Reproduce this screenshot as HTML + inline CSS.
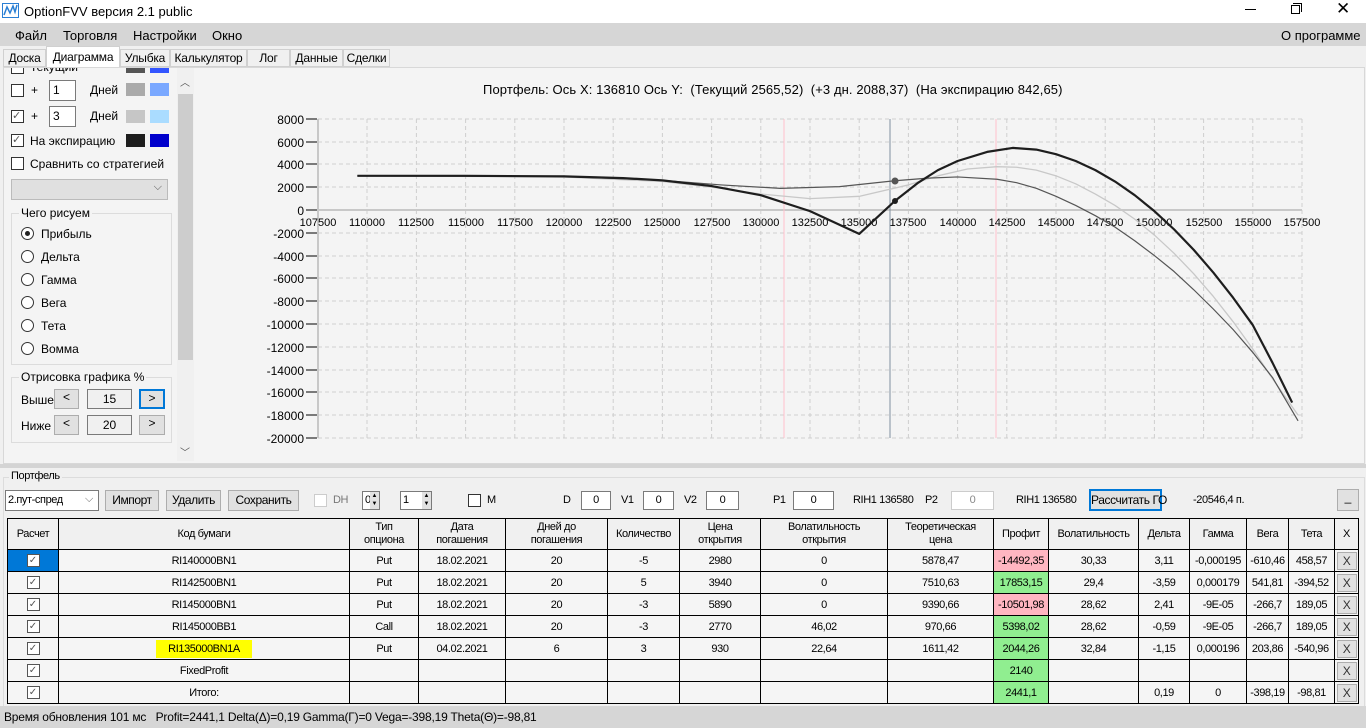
<!DOCTYPE html>
<html><head><meta charset="utf-8">
<style>
*{box-sizing:border-box;margin:0;padding:0}
body{width:1366px;height:728px;overflow:hidden;background:#f0f0f0;font-family:"Liberation Sans",sans-serif;font-size:12px;color:#000;position:relative}
.a{position:absolute;white-space:nowrap}
.n{font-family:"Liberation Sans",sans-serif;font-size:11px;letter-spacing:-0.4px}
.tab{position:absolute;top:49px;height:18px;border:1px solid #d0d0d0;background:#f0f0f0;font-size:12px;line-height:16px;text-align:center;letter-spacing:-0.2px}
.cb{position:absolute;width:13px;height:13px;border:1px solid #333;background:#fff}
.rb{position:absolute;width:13px;height:13px;border:1px solid #333;border-radius:50%;background:#fff}
.btn{position:absolute;background:#e1e1e1;border:1px solid #adadad;text-align:center;font-size:12px;white-space:nowrap}
.inp{position:absolute;background:#fff;border:1px solid #7a7a7a;text-align:center}
table{position:absolute;left:7px;top:518px;border-collapse:collapse;table-layout:fixed;font-family:"Liberation Sans",sans-serif;font-size:11px;letter-spacing:-0.4px}
td{border:1px solid #000;height:22px;text-align:center;background:#f5f5f5;padding:0;white-space:nowrap;overflow:hidden}
tr.h td{height:31px;background:#f0f0f0;line-height:13px}
.r{background:#ffb6c1}.g{background:#90ee90}
.ck{display:inline-block;width:13px;height:13px;border:1px solid #555;background:#fff;vertical-align:middle;font-size:10px;line-height:11px;color:#555;letter-spacing:0}
.x{display:inline-block;width:20px;height:18px;background:#e1e1e1;border:1px solid #adadad;line-height:16px;font-size:12px;color:#333}
</style></head><body>
<div class="a" style="left:0;top:0;width:1366px;height:23px;background:#fff"></div>
<svg class="a" style="left:2px;top:3px" width="18" height="16"><rect x="0.5" y="0.5" width="16" height="14" fill="none" stroke="#2a7fd4"/><polyline points="2,12 5,4 8,10 11,3 13,9 15,2" fill="none" stroke="#2a7fd4" stroke-width="1.5"/></svg>
<div class="a" style="left:24px;top:4px;font-size:13px">OptionFVV версия 2.1 public</div>
<div class="a" style="left:1245px;top:0;font-size:16px;width:120px">
<span class="a" style="left:0;top:9px;width:11px;height:1px;background:#000"></span>
<span class="a" style="left:46px;top:5px;width:9px;height:9px;border:1px solid #000"></span>
<span class="a" style="left:48px;top:3px;width:9px;height:9px;border-top:1px solid #000;border-right:1px solid #000"></span>
<span class="a" style="left:91px;top:-1px;font-size:17px">✕</span></div>
<div class="a" style="left:0;top:23px;width:1366px;height:23px;background:#d6d6d6"></div>
<div class="a" style="left:15px;top:28px;font-size:13px">Файл</div>
<div class="a" style="left:63px;top:28px;font-size:13px">Торговля</div>
<div class="a" style="left:133px;top:28px;font-size:13px">Настройки</div>
<div class="a" style="left:212px;top:28px;font-size:13px">Окно</div>
<div class="a" style="left:1281px;top:28px;font-size:13px">О программе</div>
<div class="tab" style="left:3px;width:43px">Доска</div>
<div class="tab" style="left:46px;width:74px;top:46px;height:22px;background:#fff;border-bottom:none;line-height:20px">Диаграмма</div>
<div class="tab" style="left:120px;width:50px">Улыбка</div>
<div class="tab" style="left:170px;width:77px">Калькулятор</div>
<div class="tab" style="left:247px;width:43px">Лог</div>
<div class="tab" style="left:290px;width:53px">Данные</div>
<div class="tab" style="left:343px;width:47px">Сделки</div>
<div class="a" style="left:3px;top:67px;width:1362px;height:397px;border:1px solid #d8d8d8;background:#f4f4f4"></div>
<div class="a" style="left:4px;top:68px;width:172px;height:393px;background:#f4f4f4;overflow:hidden">
 <div class="cb" style="left:7px;top:-7px"></div><div class="a" style="left:26px;top:-8px">Текущий</div>
 <div class="a" style="left:122px;top:-2px;width:19px;height:7px;background:#555"></div><div class="a" style="left:146px;top:-2px;width:19px;height:7px;background:#3355ff"></div>
 <div class="cb" style="left:7px;top:16px"></div><div class="a" style="left:27px;top:15px">+</div>
 <div class="inp" style="left:45px;top:12px;width:27px;height:21px;text-align:left;padding-left:3px;line-height:19px">1</div>
 <div class="a" style="left:86px;top:15px">Дней</div>
 <div class="a" style="left:122px;top:15px;width:19px;height:13px;background:#aaa"></div><div class="a" style="left:146px;top:15px;width:19px;height:13px;background:#7aa8ff"></div>
 <div class="cb" style="left:7px;top:42px;font-size:11px;line-height:11px;color:#555">✓</div><div class="a" style="left:27px;top:41px">+</div>
 <div class="inp" style="left:45px;top:38px;width:27px;height:21px;text-align:left;padding-left:3px;line-height:19px">3</div>
 <div class="a" style="left:86px;top:41px">Дней</div>
 <div class="a" style="left:122px;top:42px;width:19px;height:13px;background:#c6c6c6"></div><div class="a" style="left:146px;top:42px;width:19px;height:13px;background:#aadcff"></div>
 <div class="cb" style="left:7px;top:66px;font-size:11px;line-height:11px;color:#555">✓</div><div class="a" style="left:26px;top:66px">На экспирацию</div>
 <div class="a" style="left:122px;top:66px;width:19px;height:13px;background:#1e1e1e"></div><div class="a" style="left:146px;top:66px;width:19px;height:13px;background:#0000cc"></div>
 <div class="cb" style="left:7px;top:89px"></div><div class="a" style="left:26px;top:89px">Сравнить со стратегией</div>
 <div class="a" style="left:7px;top:111px;width:157px;height:21px;background:#e0e0e0;border:1px solid #bbb"><span class="a" style="right:5px;top:1px;font-size:11px;color:#555">⌵</span></div>
 <div class="a" style="left:7px;top:145px;width:161px;height:152px;border:1px solid #dcdcdc"></div>
 <div class="a" style="left:15px;top:138px;background:#f4f4f4;padding:0 2px">Чего рисуем</div>
 <div class="rb" style="left:17px;top:159px"><span class="a" style="left:3px;top:3px;width:5px;height:5px;border-radius:50%;background:#222"></span></div><div class="a" style="left:37px;top:159px">Прибыль</div>
 <div class="rb" style="left:17px;top:182px"></div><div class="a" style="left:37px;top:182px">Дельта</div>
 <div class="rb" style="left:17px;top:205px"></div><div class="a" style="left:37px;top:205px">Гамма</div>
 <div class="rb" style="left:17px;top:228px"></div><div class="a" style="left:37px;top:228px">Вега</div>
 <div class="rb" style="left:17px;top:251px"></div><div class="a" style="left:37px;top:251px">Тета</div>
 <div class="rb" style="left:17px;top:274px"></div><div class="a" style="left:37px;top:274px">Вомма</div>
 <div class="a" style="left:7px;top:309px;width:161px;height:66px;border:1px solid #dcdcdc"></div>
 <div class="a" style="left:15px;top:302px;background:#f4f4f4;padding:0 2px">Отрисовка графика %</div>
 <div class="a" style="left:17px;top:325px">Выше</div>
 <div class="btn" style="left:50px;top:321px;width:25px;height:20px">&lt;</div>
 <div class="inp" style="left:83px;top:321px;width:45px;height:20px;line-height:18px;background:#f0f0f0">15</div>
 <div class="btn" style="left:135px;top:321px;width:26px;height:20px;border:2px solid #0078d7">&gt;</div>
 <div class="a" style="left:17px;top:351px">Ниже</div>
 <div class="btn" style="left:50px;top:347px;width:25px;height:20px">&lt;</div>
 <div class="inp" style="left:83px;top:347px;width:45px;height:20px;line-height:18px;background:#f0f0f0">20</div>
 <div class="btn" style="left:135px;top:347px;width:26px;height:20px">&gt;</div>
</div>
<div class="a" style="left:177px;top:68px;width:17px;height:393px;background:#f0f0f0"><div class="a" style="left:1px;top:26px;width:15px;height:266px;background:#cdcdcd"></div><span class="a" style="left:3px;top:6px;font-size:10px;color:#555">︿</span><span class="a" style="left:3px;top:376px;font-size:10px;color:#555">﹀</span></div>
<div class="a" style="left:483px;top:82px;font-size:13px;letter-spacing:0.1px">Портфель: Ось X: 136810 Ось Y:&nbsp; (Текущий 2565,52)&nbsp; (+3 дн. 2088,37)&nbsp; (На экспирацию 842,65)</div>
<svg class="a" style="left:0;top:0" width="1366" height="470">
<g stroke="#cfcfcf" stroke-dasharray="4,3" stroke-width="1">
<line x1="318" y1="119" x2="1302" y2="119"/><line x1="318" y1="142" x2="1302" y2="142"/><line x1="318" y1="164" x2="1302" y2="164"/><line x1="318" y1="187" x2="1302" y2="187"/>
<line x1="318" y1="233" x2="1302" y2="233"/><line x1="318" y1="256" x2="1302" y2="256"/><line x1="318" y1="278" x2="1302" y2="278"/><line x1="318" y1="301" x2="1302" y2="301"/><line x1="318" y1="324" x2="1302" y2="324"/><line x1="318" y1="347" x2="1302" y2="347"/><line x1="318" y1="370" x2="1302" y2="370"/><line x1="318" y1="392" x2="1302" y2="392"/><line x1="318" y1="415" x2="1302" y2="415"/><line x1="318" y1="438" x2="1302" y2="438"/>
<line x1="367" y1="119" x2="367" y2="438"/><line x1="416.4" y1="119" x2="416.4" y2="438"/><line x1="465.6" y1="119" x2="465.6" y2="438"/><line x1="514.8" y1="119" x2="514.8" y2="438"/><line x1="564" y1="119" x2="564" y2="438"/><line x1="613.2" y1="119" x2="613.2" y2="438"/><line x1="662.4" y1="119" x2="662.4" y2="438"/><line x1="711.6" y1="119" x2="711.6" y2="438"/><line x1="760.8" y1="119" x2="760.8" y2="438"/><line x1="810" y1="119" x2="810" y2="438"/><line x1="859.2" y1="119" x2="859.2" y2="438"/><line x1="908.4" y1="119" x2="908.4" y2="438"/><line x1="957.6" y1="119" x2="957.6" y2="438"/><line x1="1006.8" y1="119" x2="1006.8" y2="438"/><line x1="1056" y1="119" x2="1056" y2="438"/><line x1="1105.2" y1="119" x2="1105.2" y2="438"/><line x1="1154.4" y1="119" x2="1154.4" y2="438"/><line x1="1203.6" y1="119" x2="1203.6" y2="438"/><line x1="1252.8" y1="119" x2="1252.8" y2="438"/><line x1="1302" y1="119" x2="1302" y2="438"/>
</g>
<line x1="318" y1="119" x2="318" y2="438" stroke="#c8c8c8" stroke-width="2"/>
<line x1="318" y1="210" x2="1302" y2="210" stroke="#c8c8c8" stroke-width="2"/>
<g stroke="#000"><line x1="306" y1="119" x2="317" y2="119"/><line x1="306" y1="142" x2="317" y2="142"/><line x1="306" y1="164" x2="317" y2="164"/><line x1="306" y1="187" x2="317" y2="187"/><line x1="306" y1="210" x2="317" y2="210"/><line x1="306" y1="233" x2="317" y2="233"/><line x1="306" y1="256" x2="317" y2="256"/><line x1="306" y1="278" x2="317" y2="278"/><line x1="306" y1="301" x2="317" y2="301"/><line x1="306" y1="324" x2="317" y2="324"/><line x1="306" y1="347" x2="317" y2="347"/><line x1="306" y1="370" x2="317" y2="370"/><line x1="306" y1="392" x2="317" y2="392"/><line x1="306" y1="415" x2="317" y2="415"/><line x1="306" y1="438" x2="317" y2="438"/></g>
<line x1="784" y1="119" x2="784" y2="438" stroke="#ffc0cb"/>
<line x1="996" y1="119" x2="996" y2="438" stroke="#ffc0cb"/>
<line x1="890" y1="119" x2="890" y2="438" stroke="#8090a0"/>
<g font-family="Liberation Sans,sans-serif" font-size="12" text-anchor="end">
<text x="304" y="124">8000</text><text x="304" y="147">6000</text><text x="304" y="169">4000</text><text x="304" y="192">2000</text><text x="304" y="215">0</text><text x="304" y="238">-2000</text><text x="304" y="261">-4000</text><text x="304" y="283">-6000</text><text x="304" y="306">-8000</text><text x="304" y="329">-10000</text><text x="304" y="352">-12000</text><text x="304" y="375">-14000</text><text x="304" y="397">-16000</text><text x="304" y="420">-18000</text><text x="304" y="443">-20000</text>
</g>
<g font-family="Liberation Sans,sans-serif" font-size="11" text-anchor="middle">
<text x="318" y="226">107500</text><text x="367" y="226">110000</text><text x="416" y="226">112500</text><text x="466" y="226">115000</text><text x="515" y="226">117500</text><text x="564" y="226">120000</text><text x="613" y="226">122500</text><text x="662" y="226">125000</text><text x="712" y="226">127500</text><text x="761" y="226">130000</text><text x="810" y="226">132500</text><text x="859" y="226">135000</text><text x="908" y="226">137500</text><text x="958" y="226">140000</text><text x="1007" y="226">142500</text><text x="1056" y="226">145000</text><text x="1105" y="226">147500</text><text x="1154" y="226">150000</text><text x="1204" y="226">152500</text><text x="1253" y="226">155000</text><text x="1302" y="226">157500</text>
</g>
<g transform="translate(318,210) scale(0.01968,-0.011394) translate(-107500,0)" fill="none" stroke-linejoin="round">
<polyline vector-effect="non-scaling-stroke" stroke="#c8c8c8" stroke-width="1.3" points="109500,3000 120000,2900 125000,2500 128000,1900 130000,1400 132500,1000 135000,1200 137500,2200 139000,3000 140500,3600 142000,3800 143000,3750 144000,3500 145000,3000 146000,2300 147000,1400 148000,400 149000,-800 150000,-2200 151000,-3800 152000,-5600 153000,-7600 154000,-9800 155000,-12200 156000,-14800 157300,-18000"/>
<polyline vector-effect="non-scaling-stroke" stroke="#555" stroke-width="1.2" points="109500,3000 120000,2950 125000,2600 128000,2200 131000,1900 134000,2050 136810,2565 138500,2800 140000,2900 142000,2700 143000,2400 144000,1900 145000,1200 146000,400 147000,-500 148000,-1500 149000,-2700 150000,-4000 151000,-5400 152000,-7000 153000,-8700 154000,-10500 155000,-12500 156000,-14700 157300,-18500"/>
<polyline vector-effect="non-scaling-stroke" stroke="#1e1e1e" stroke-width="2.2" points="109500,3000 115000,3000 120000,2950 123000,2800 125000,2600 127500,2100 130000,1300 132500,-100 135000,-2100 136810,790 138000,2400 139000,3500 140000,4300 141500,5100 142800,5450 144000,5300 145000,4900 146000,4300 147000,3500 148000,2500 149000,1300 150000,-100 151000,-1700 152000,-3500 153000,-5500 154000,-7700 155000,-10100 156000,-13400 157000,-16900"/>
</g>
<circle cx="895" cy="181" r="3.5" fill="#555"/>
<circle cx="895" cy="201" r="3" fill="#1e1e1e"/>
</svg>
<div class="a" style="left:0;top:464px;width:1366px;height:4px;background:#d4d4d4"></div>
<div class="a" style="left:3px;top:477px;width:1362px;height:230px;border:1px solid #dcdcdc"></div>
<div class="a n" style="left:9px;top:470px;background:#f0f0f0;padding:0 2px">Портфель</div>
<div class="a n" style="left:5px;top:490px;width:94px;height:21px;background:#fff;border:1px solid #7a7a7a;padding:3px 2px">2.пут-спред<span class="a" style="right:5px;top:2px;color:#666">⌵</span></div>
<div class="btn n" style="left:105px;top:490px;width:54px;height:21px;line-height:19px">Импорт</div>
<div class="btn n" style="left:166px;top:490px;width:55px;height:21px;line-height:19px">Удалить</div>
<div class="btn n" style="left:228px;top:490px;width:71px;height:21px;line-height:19px">Сохранить</div>
<div class="cb" style="left:314px;top:494px;border-color:#ccc"></div><div class="a n" style="left:333px;top:494px;color:#777">DH</div>
<div class="inp n" style="left:362px;top:491px;width:18px;height:19px;text-align:left;line-height:17px;padding-left:2px">0</div><div class="a" style="left:370px;top:492px;width:9px;height:17px;background:#e1e1e1;font-size:6px;line-height:8px;text-align:center">▲<br>▼</div>
<div class="inp n" style="left:400px;top:491px;width:32px;height:19px;text-align:left;line-height:17px;padding-left:2px">1</div><div class="a" style="left:422px;top:492px;width:9px;height:17px;background:#e1e1e1;font-size:6px;line-height:8px;text-align:center">▲<br>▼</div>
<div class="cb" style="left:468px;top:494px"></div><div class="a n" style="left:487px;top:494px">M</div>
<div class="a n" style="left:563px;top:494px">D</div><div class="inp n" style="left:581px;top:491px;width:30px;height:19px;line-height:17px">0</div>
<div class="a n" style="left:621px;top:494px">V1</div><div class="inp n" style="left:643px;top:491px;width:31px;height:19px;line-height:17px">0</div>
<div class="a n" style="left:684px;top:494px">V2</div><div class="inp n" style="left:706px;top:491px;width:33px;height:19px;line-height:17px">0</div>
<div class="a n" style="left:773px;top:494px">P1</div><div class="inp n" style="left:793px;top:491px;width:41px;height:19px;line-height:17px">0</div>
<div class="a n" style="left:853px;top:494px">RIH1 136580</div><div class="a n" style="left:925px;top:494px">P2</div>
<div class="inp n" style="left:951px;top:491px;width:43px;height:19px;line-height:17px;border-color:#ccc;color:#888">0</div>
<div class="a n" style="left:1016px;top:494px">RIH1 136580</div>
<div class="btn n" style="left:1089px;top:489px;width:73px;height:22px;border:2px solid #0078d7;line-height:18px">Рассчитать ГО</div>
<div class="a n" style="left:1193px;top:494px">-20546,4 п.</div>
<div class="btn" style="left:1337px;top:489px;width:22px;height:22px">_</div>
<table>
<colgroup><col style="width:51px"><col style="width:291px"><col style="width:69px"><col style="width:87px"><col style="width:102px"><col style="width:72px"><col style="width:81px"><col style="width:127px"><col style="width:106px"><col style="width:55px"><col style="width:90px"><col style="width:51px"><col style="width:57px"><col style="width:42px"><col style="width:46px"><col style="width:24px"></colgroup>
<tr class="h"><td>Расчет</td><td>Код бумаги</td><td>Тип<br>опциона</td><td>Дата<br>погашения</td><td>Дней до<br>погашения</td><td>Количество</td><td>Цена<br>открытия</td><td>Волатильность<br>открытия</td><td>Теоретическая<br>цена</td><td>Профит</td><td>Волатильность</td><td>Дельта</td><td>Гамма</td><td>Вега</td><td>Тета</td><td>X</td></tr>
<tr><td style="background:#0078d7"><span class="ck">✓</span></td><td>RI140000BN1</td><td>Put</td><td>18.02.2021</td><td>20</td><td>-5</td><td>2980</td><td>0</td><td>5878,47</td><td class="r">-14492,35</td><td>30,33</td><td>3,11</td><td>-0,000195</td><td>-610,46</td><td>458,57</td><td><span class="x">X</span></td></tr>
<tr><td><span class="ck">✓</span></td><td>RI142500BN1</td><td>Put</td><td>18.02.2021</td><td>20</td><td>5</td><td>3940</td><td>0</td><td>7510,63</td><td class="g">17853,15</td><td>29,4</td><td>-3,59</td><td>0,000179</td><td>541,81</td><td>-394,52</td><td><span class="x">X</span></td></tr>
<tr><td><span class="ck">✓</span></td><td>RI145000BN1</td><td>Put</td><td>18.02.2021</td><td>20</td><td>-3</td><td>5890</td><td>0</td><td>9390,66</td><td class="r">-10501,98</td><td>28,62</td><td>2,41</td><td>-9E-05</td><td>-266,7</td><td>189,05</td><td><span class="x">X</span></td></tr>
<tr><td><span class="ck">✓</span></td><td>RI145000BB1</td><td>Call</td><td>18.02.2021</td><td>20</td><td>-3</td><td>2770</td><td>46,02</td><td>970,66</td><td class="g">5398,02</td><td>28,62</td><td>-0,59</td><td>-9E-05</td><td>-266,7</td><td>189,05</td><td><span class="x">X</span></td></tr>
<tr><td><span class="ck">✓</span></td><td><span style="background:#ffff00;padding:3px 12px">RI135000BN1A</span></td><td>Put</td><td>04.02.2021</td><td>6</td><td>3</td><td>930</td><td>22,64</td><td>1611,42</td><td class="g">2044,26</td><td>32,84</td><td>-1,15</td><td>0,000196</td><td>203,86</td><td>-540,96</td><td><span class="x">X</span></td></tr>
<tr><td><span class="ck">✓</span></td><td>FixedProfit</td><td></td><td></td><td></td><td></td><td></td><td></td><td></td><td class="g">2140</td><td></td><td></td><td></td><td></td><td></td><td><span class="x">X</span></td></tr>
<tr><td><span class="ck">✓</span></td><td>Итого:</td><td></td><td></td><td></td><td></td><td></td><td></td><td></td><td class="g">2441,1</td><td></td><td>0,19</td><td>0</td><td>-398,19</td><td>-98,81</td><td><span class="x">X</span></td></tr>
</table>
<div class="a" style="left:0;top:706px;width:1366px;height:22px;background:#d6d6d6"></div>
<div class="a" style="left:4px;top:710px;font-size:12px;letter-spacing:-0.2px">Время обновления 101 мс&nbsp;&nbsp; Profit=2441,1 Delta(Δ)=0,19 Gamma(Γ)=0 Vega=-398,19 Theta(Θ)=-98,81</div>
</body></html>
